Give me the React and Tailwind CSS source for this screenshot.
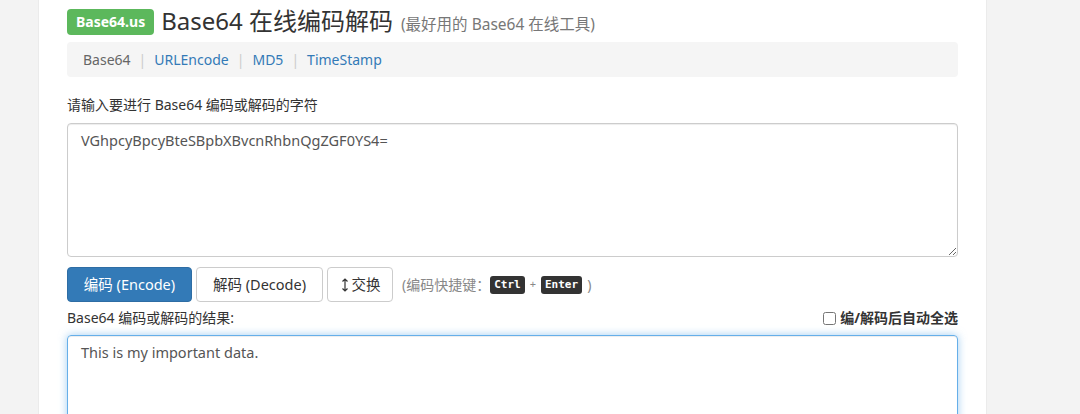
import { useState } from 'react'

const FONT = { fontFamily: '"Noto Sans", "Noto Sans CJK SC", sans-serif' }

/* ── Header ───────────────────────────────────────────── */
function Header() {
  return (
    <div className="flex h-[28px] items-center gap-[7px]">
      <span className="inline-flex h-[26px] items-center rounded-[4px] bg-[#5cb85c] px-[9px] text-[14px] font-bold leading-none text-white">
        Base64.us
      </span>
      <h1 className="whitespace-nowrap text-[24px] leading-[28px] text-[#333]">
        Base64 在线编码解码
        <small className="ml-[8px] text-[15.5px] text-[#777]">(最好用的 Base64 在线工具)</small>
      </h1>
    </div>
  )
}

const NAV = [
  { label: 'Base64', active: true },
  { label: 'URLEncode' },
  { label: 'MD5' },
  { label: 'TimeStamp' },
]

function Nav() {
  return (
    <div className="mt-[6px] flex h-[35px] items-center rounded-[4px] bg-[#f5f5f5] px-[16px] text-[14px]">
      {NAV.map((n, i) => (
        <span key={n.label} className="flex items-center">
          {i > 0 && <span className="px-[8px] text-[#ccc]">|</span>}
          <a className={n.active ? 'text-[#666]' : 'text-[#337ab7]'}>{n.label}</a>
        </span>
      ))}
    </div>
  )
}

function Kbd({ children }) {
  return (
    <kbd
      className="rounded-[3px] bg-[#333] px-[4px] py-[2px] text-[11px] font-bold leading-[14px] text-white"
      style={{ fontFamily: '"DejaVu Sans Mono", monospace' }}
    >
      {children}
    </kbd>
  )
}

/* ── Main Page ────────────────────────────────────────── */
export default function App() {
  const [input, setInput] = useState('VGhpcyBpcyBteSBpbXBvcnRhbnQgZGF0YS4=')
  const [output, setOutput] = useState('This is my important data.')
  const [autoSelect, setAutoSelect] = useState(false)

  return (
    <div className="min-h-screen bg-[#f3f3f3]" style={FONT}>
      <div className="ml-[38px] min-h-screen w-[949px] border-x border-[#ebebeb] bg-white px-[28px] pt-[8px]">
        <Header />
        <Nav />

        <label className="mt-[18px] block text-[14px] leading-[20px] text-[#333]">
          请输入要进行 Base64 编码或解码的字符
        </label>
        <textarea
          value={input}
          onChange={(e) => setInput(e.target.value)}
          className="mt-[8px] block h-[134px] w-full resize-y rounded-[4px] border border-[#ccc] px-[13px] py-[4px] text-[14.5px] leading-[24px] text-[#555] shadow-[inset_0_1px_1px_rgba(0,0,0,0.075)] outline-none"
        />

        <div className="mt-[10px] flex items-center text-[14.5px]">
          <button className="h-[35px] w-[125px] rounded-[4px] border border-[#2e6da4] bg-[#337ab7] text-white">
            编码 (Encode)
          </button>
          <button className="ml-[4px] h-[35px] w-[127px] rounded-[4px] border border-[#ccc] bg-white text-[#333]">
            解码 (Decode)
          </button>
          <button className="ml-[4px] flex h-[35px] w-[66px] items-center justify-center gap-[2px] rounded-[4px] border border-[#ccc] bg-white text-[#333]">
            <svg width="10" height="16" viewBox="0 0 10 16" fill="none" stroke="#333" strokeWidth="1.2">
              <path d="M5 2v12M2.5 4.5L5 2l2.5 2.5M2.5 11.5L5 14l2.5-2.5" />
            </svg>
            交换
          </button>
          <span className="ml-[9px] flex items-center text-[14px] text-[#888]">
            <span>(编码快捷键：</span>
            <Kbd>Ctrl</Kbd>
            <span className="px-[5px] text-[11px]">+</span>
            <Kbd>Enter</Kbd>
            <span className="ml-[5px]">)</span>
          </span>
        </div>

        <div className="mt-[5px] flex items-end justify-between">
          <span className="text-[14px] leading-[22px] text-[#333]">Base64 编码或解码的结果:</span>
          <label className="flex items-center gap-[4px] text-[14px] font-bold leading-[22px] text-[#333]">
            <input
              type="checkbox"
              checked={autoSelect}
              onChange={(e) => setAutoSelect(e.target.checked)}
              className="h-[13px] w-[13px]"
            />
            编/解码后自动全选
          </label>
        </div>
        <textarea
          value={output}
          onChange={(e) => setOutput(e.target.value)}
          className="mt-[6px] block h-[135px] w-full resize-y rounded-[4px] border border-[#66afe9] px-[13px] py-[4px] text-[14.5px] leading-[24px] text-[#555] shadow-[inset_0_1px_1px_rgba(0,0,0,0.075),0_0_8px_rgba(102,175,233,0.6)] outline-none"
        />
      </div>
    </div>
  )
}
